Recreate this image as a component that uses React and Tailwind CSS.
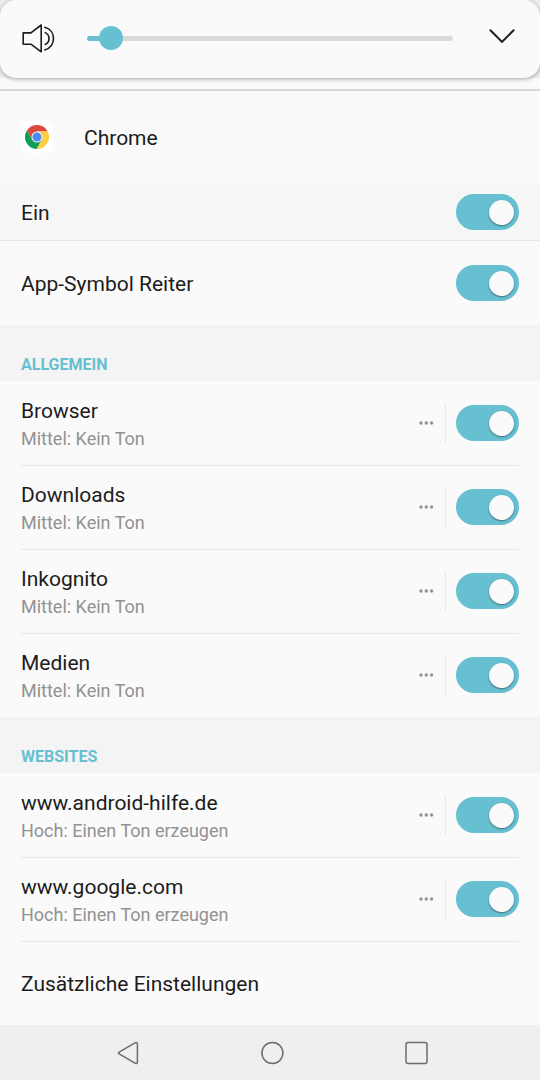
import React, { useState } from "react";

const generalChannels = [
  { name: "Browser", detail: "Mittel: Kein Ton" },
  { name: "Downloads", detail: "Mittel: Kein Ton" },
  { name: "Inkognito", detail: "Mittel: Kein Ton" },
  { name: "Medien", detail: "Mittel: Kein Ton" },
];

const websiteChannels = [
  { name: "www.android-hilfe.de", detail: "Hoch: Einen Ton erzeugen" },
  { name: "www.google.com", detail: "Hoch: Einen Ton erzeugen" },
];

const Toggle = ({ id }) => {
  const [on, setOn] = useState(true);

  return (
    <input
      id={id}
      type="checkbox"
      role="switch"
      checked={on}
      onChange={() => setOn(!on)}
      className="flex h-9 w-[63px] shrink-0 cursor-pointer appearance-none items-center rounded-full bg-[#c8c8c8] px-[5px] before:size-[25px] before:rounded-full before:bg-[#fafafa] before:shadow-[0_1px_2px_rgba(0,0,0,0.45)] checked:justify-end checked:bg-[#66c0d2]"
    />
  );
};

const SectionTitle = ({ children }) => (
  <h2 className="flex h-14 items-end bg-[#f4f4f4] px-[21px] pb-1 text-base leading-6 font-bold text-[#66c0d2]">
    {children}
  </h2>
);

const ChannelRow = ({ name, detail }) => (
  <li className="flex h-[84px] items-center border-t border-[#e8e8e8] pb-px first:border-transparent">
    <label htmlFor={name} className="min-w-0 flex-1 pt-1">
      <span className="block truncate text-[21px] leading-7">{name}</span>
      <span className="block truncate text-lg leading-7 text-[#929292]">{detail}</span>
    </label>
    <button type="button" aria-label={`${name} Optionen`} className="mr-[11px] cursor-pointer">
      <svg viewBox="0 0 16 16" className="size-4 fill-[#929292]">
        <circle cx="3" cy="8" r="1.7" />
        <circle cx="8.3" cy="8" r="1.7" />
        <circle cx="13.6" cy="8" r="1.7" />
      </svg>
    </button>
    <div className="mr-[10px] h-10 border-l border-[#e8e8e8]" />
    <Toggle id={name} />
  </li>
);

const VolumePanel = () => {
  const [volume, setVolume] = useState(3.5);

  return (
    <div className="bg-[#eceeee]">
      <div className="flex h-[78px] items-center rounded-2xl bg-[#fafafa] pr-[25px] pb-0.5 pl-[21px] shadow-[0_1px_4px_rgba(0,0,0,0.35)]">
        <svg
          viewBox="0 0 34 30"
          className="mr-8 h-[30px] w-[34px] shrink-0 fill-none stroke-[#1c1c1c] stroke-[1.6]"
          strokeLinejoin="round"
          strokeLinecap="round"
        >
          <path d="M2.2 9.9H9.9L20.2 2V28.8L9.9 21.2H2.2Z" />
          <path d="M24.3 9.6C29.2 11.9 29.2 19.2 24.3 21.5" />
          <path d="M23.8 4.3C35.4 7.4 35.4 23.8 23.8 26.9" />
        </svg>
        <input
          type="range"
          aria-label="Lautstärke"
          min="0"
          max="100"
          step="0.5"
          value={volume}
          onChange={(e) => setVolume(Number(e.target.value))}
          style={{
            backgroundImage: `linear-gradient(to right, #66c0d2 ${volume}%, #dadada ${volume}%)`,
          }}
          className="h-[5px] min-w-0 flex-1 cursor-pointer appearance-none rounded-full [&::-webkit-slider-thumb]:size-6 [&::-webkit-slider-thumb]:appearance-none [&::-webkit-slider-thumb]:rounded-full [&::-webkit-slider-thumb]:bg-[#66c0d2]"
        />
        <button type="button" aria-label="Mehr anzeigen" className="ml-[34px] shrink-0 cursor-pointer">
          <svg
            viewBox="0 0 28 20"
            className="h-5 w-7 fill-none stroke-[#1c1c1c] stroke-2"
            strokeLinecap="round"
          >
            <path d="M3.4 2.2L15 13.9L26.6 2.2" />
          </svg>
        </button>
      </div>
    </div>
  );
};

const ChromeIcon = () => (
  <div className="flex size-8 shrink-0 items-center justify-center rounded-lg bg-white">
    <svg viewBox="0 0 24 24" className="size-6">
      <path fill="#db4c3f" d="M1.9 5.51A12 12 0 0 1 22.67 6.5H12L7.24 14.75Z" />
      <path fill="#ffcd46" d="M22.67 6.5A12 12 0 0 1 11.43 23.99L16.76 14.75L12 6.5Z" />
      <path fill="#0f9d58" d="M11.43 23.99A12 12 0 0 1 1.9 5.51L7.24 14.75H16.76Z" />
      <circle cx="12" cy="12" r="5.5" fill="#f4f4f4" />
      <circle cx="12" cy="12" r="4.5" fill="#4c8bf5" />
    </svg>
  </div>
);

const NavigationBar = () => (
  <nav className="flex h-[55px] items-center justify-center gap-30 bg-[#eeeff1] pl-1.5">
    <button type="button" aria-label="Zurück" className="cursor-pointer">
      <svg
        viewBox="0 0 24 24"
        className="size-6 fill-none stroke-[#6c6c6c] stroke-[1.5]"
        strokeLinejoin="round"
      >
        <path d="M2.1 11.1L18.4 1.7Q20.4 1 20.4 3V21Q20.4 23 18.4 22.3L2.1 12.9Q0.8 12 2.1 11.1Z" />
      </svg>
    </button>
    <button type="button" aria-label="Startseite" className="cursor-pointer">
      <svg viewBox="0 0 24 24" className="size-6 fill-none stroke-[#6c6c6c] stroke-[1.5]">
        <circle cx="11.4" cy="12" r="10.5" />
      </svg>
    </button>
    <button type="button" aria-label="Letzte Apps" className="cursor-pointer">
      <svg viewBox="0 0 24 24" className="size-6 fill-none stroke-[#6c6c6c] stroke-[1.5]">
        <rect x="1" y="1.5" width="21" height="21" rx="2" />
      </svg>
    </button>
  </nav>
);

const App = () => {
  return (
    <div className="flex min-h-screen flex-col bg-[#fafafa] font-[Roboto,sans-serif] text-[#1c1c1c]">
      <VolumePanel />

      <main className="mt-[11px] flex-1 border-t-2 border-[#d8d8d8]">
        <header className="flex h-[93px] items-center gap-[31px] px-[21px] pb-0.5">
          <ChromeIcon />
          <h1 className="pt-0.5 text-[21px] leading-7">Chrome</h1>
        </header>

        <div className="flex h-[57px] items-center justify-between border-b border-[#e8e8e8] bg-[#f6f6f6] px-[21px]">
          <label htmlFor="notifications" className="pt-0.5 text-[21px] leading-7">
            Ein
          </label>
          <Toggle id="notifications" />
        </div>
        <div className="flex h-[84px] items-center justify-between px-[21px]">
          <label htmlFor="badge" className="pt-0.5 text-[21px] leading-7">
            App-Symbol Reiter
          </label>
          <Toggle id="badge" />
        </div>

        <SectionTitle>ALLGEMEIN</SectionTitle>
        <ul className="px-[21px]">
          {generalChannels.map((channel) => (
            <ChannelRow key={channel.name} {...channel} />
          ))}
        </ul>

        <SectionTitle>WEBSITES</SectionTitle>
        <ul className="px-[21px]">
          {websiteChannels.map((channel) => (
            <ChannelRow key={channel.name} {...channel} />
          ))}
          <li className="flex h-[84px] items-center border-t border-[#e8e8e8] pb-px">
            <a href="#settings" className="pt-0.5 text-[21px] leading-7">
              Zusätzliche Einstellungen
            </a>
          </li>
        </ul>
      </main>

      <NavigationBar />
    </div>
  );
};

export default App;
